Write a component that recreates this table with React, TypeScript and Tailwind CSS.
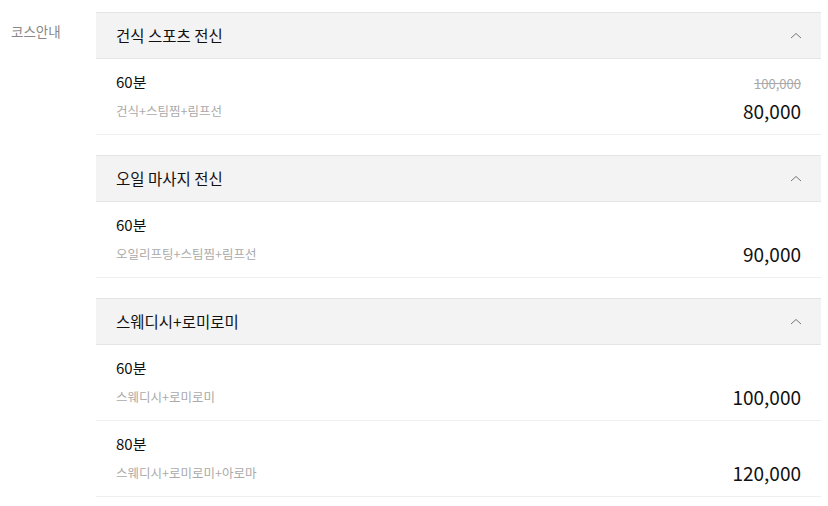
const courses = [
  {
    title: "건식 스포츠 전신",
    items: [{ time: "60분", desc: "건식+스팀찜+림프선", price: "80,000", was: "100,000" }],
  },
  {
    title: "오일 마사지 전신",
    items: [{ time: "60분", desc: "오일리프팅+스팀찜+림프선", price: "90,000" }],
  },
  {
    title: "스웨디시+로미로미",
    items: [
      { time: "60분", desc: "스웨디시+로미로미", price: "100,000" },
      { time: "80분", desc: "스웨디시+로미로미+아로마", price: "120,000" },
    ],
  },
];

function ChevronUp() {
  return (
    <svg width="12" height="7" viewBox="0 0 12 7" fill="none">
      <polyline points="1,6 6,1.5 11,6" stroke="#777" strokeWidth="1" />
    </svg>
  );
}

export default function App() {
  return (
    <div
      className="flex w-[828px] bg-white pt-3"
      style={{ fontFamily: '"Noto Sans CJK KR", "Noto Sans", sans-serif' }}
    >
      <div className="w-[96px] shrink-0 pl-[11px] pt-[9px] text-[13.5px] leading-[20px] text-[#888]">
        코스안내
      </div>
      <div className="flex w-[725px] flex-col gap-5">
        {courses.map((c) => (
          <div key={c.title}>
            <div className="flex h-[47px] items-center justify-between border-y border-[#e5e5e5] bg-[#f3f3f3] pl-5 pr-[19px]">
              <span className="text-[15.5px] text-[#111]">{c.title}</span>
              <ChevronUp />
            </div>
            {c.items.map((it) => (
              <div
                key={it.time}
                className="flex h-[76px] justify-between border-b border-[#efefef] pl-5 pr-5"
              >
                <div className="pt-[13px]">
                  <p className="text-[15px] leading-[20px] text-[#111]">{it.time}</p>
                  <p className="mt-[10px] text-[12.5px] leading-[18px] text-[#aaa]">{it.desc}</p>
                </div>
                <div className="flex flex-col items-end justify-end pb-[10px]">
                  {it.was && (
                    <span className="mb-[5px] text-[13px] leading-[18px] text-[#aaa] line-through">
                      {it.was}
                    </span>
                  )}
                  <span className="text-[19px] leading-[26px] text-[#111]">{it.price}</span>
                </div>
              </div>
            ))}
          </div>
        ))}
      </div>
    </div>
  );
}
